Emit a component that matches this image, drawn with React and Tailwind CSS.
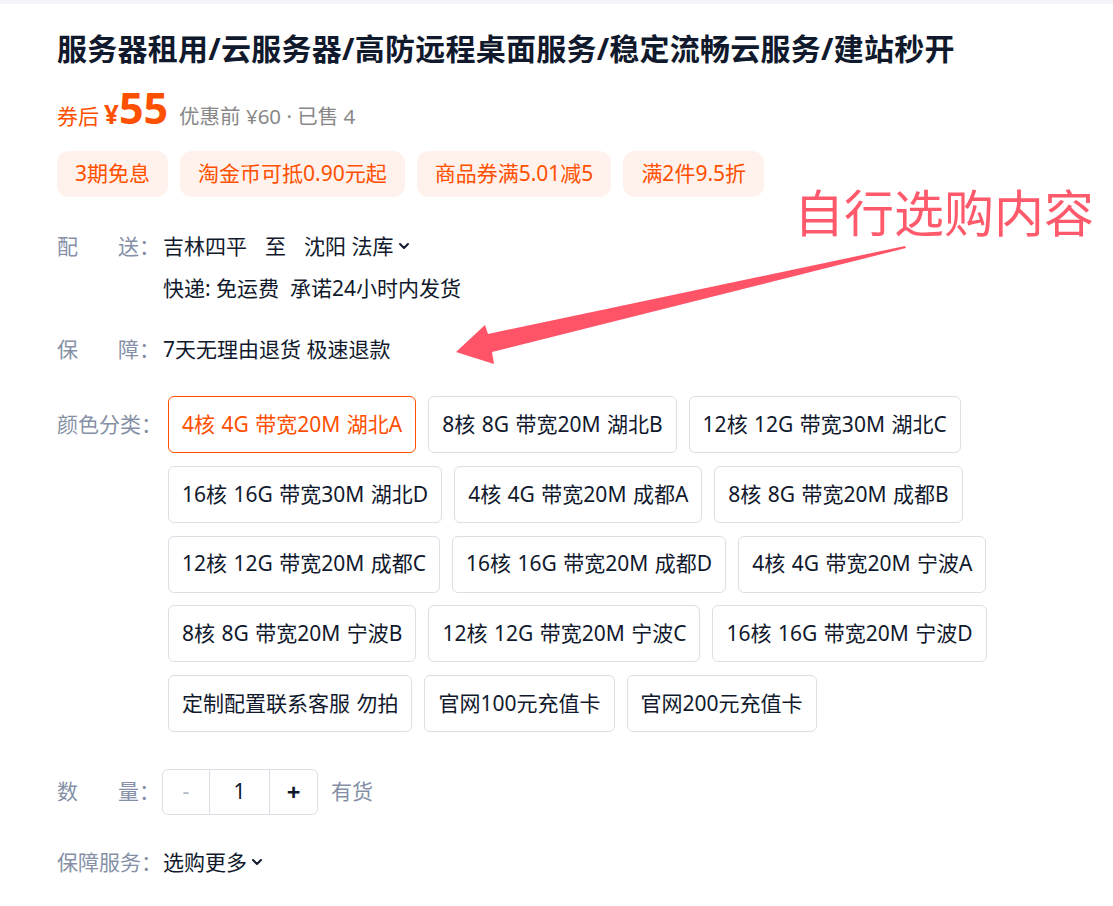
import { ChevronDown } from 'lucide-react'

const tags = ['3期免息', '淘金币可抵0.90元起', '商品券满5.01减5', '满2件9.5折']

const options = [
  '4核 4G 带宽20M 湖北A',
  '8核 8G 带宽20M 湖北B',
  '12核 12G 带宽30M 湖北C',
  '16核 16G 带宽30M 湖北D',
  '4核 4G 带宽20M 成都A',
  '8核 8G 带宽20M 成都B',
  '12核 12G 带宽20M 成都C',
  '16核 16G 带宽20M 成都D',
  '4核 4G 带宽20M 宁波A',
  '8核 8G 带宽20M 宁波B',
  '12核 12G 带宽20M 宁波C',
  '16核 16G 带宽20M 宁波D',
  '定制配置联系客服 勿拍',
  '官网100元充值卡',
  '官网200元充值卡',
]

function Label({ a, b }) {
  return (
    <div className="flex w-[103px] shrink-0 justify-between text-[#8590a6]">
      <span>{a}</span>
      <span>{b}</span>
    </div>
  )
}

export default function App() {
  const selected = 0

  return (
    <div
      className="relative min-h-[906px] w-full bg-white text-[21px] text-[#11192d]"
      style={{ fontFamily: '"Noto Sans", "Noto Sans CJK SC", sans-serif' }}
    >
      <div className="h-[4px] bg-[#f3f5f8]" />

      <div className="px-[57px]">
        <h1 className="mt-[25px] text-[30px] font-bold leading-[40px] tracking-[0.25px] text-[#11192d]">
          服务器租用/云服务器/高防远程桌面服务/稳定流畅云服务/建站秒开
        </h1>

        {/* price */}
        <div className="mt-[17px] flex h-[50px] items-baseline">
          <span className="text-[21px] text-[#ff5000]">券后</span>
          <span className="ml-[5px] text-[26px] font-bold text-[#ff5000]">¥</span>
          <span className="text-[43px] font-bold leading-none text-[#ff5000]">55</span>
          <span className="ml-[11px] text-[20.5px] text-[#888888]">优惠前 ¥60 · 已售 4</span>
        </div>

        {/* promotion tags */}
        <div className="mt-[15px] flex gap-[12px]">
          {tags.map((t) => (
            <div key={t} className="flex h-[46px] items-center rounded-[12px] bg-[#fff1eb] px-[18px] text-[21px] text-[#ff5000]">
              {t}
            </div>
          ))}
        </div>

        {/* delivery */}
        <div className="mt-[34px] flex leading-[30px]">
          <Label a="配" b="送：" />
          <div className="ml-[3px]">
            <div className="flex items-center">
              <span>吉林四平</span>
              <span className="ml-[18px]">至</span>
              <span className="ml-[18px]">沈阳 法库</span>
              <ChevronDown size={16} strokeWidth={3} className="ml-[3px]" />
            </div>
            <div className="mt-[12px]">快递: 免运费&nbsp;&nbsp;承诺24小时内发货</div>
          </div>
        </div>

        {/* guarantee */}
        <div className="mt-[31px] flex leading-[30px]">
          <Label a="保" b="障：" />
          <div className="ml-[3px]">7天无理由退货 极速退款</div>
        </div>

        {/* sku options */}
        <div className="mt-[32px] flex">
          <div className="flex h-[57px] w-[111px] shrink-0 items-center text-[#8590a6]">颜色分类：</div>
          <div className="flex max-w-[880px] flex-wrap gap-x-[12px] gap-y-[12.75px] [word-spacing:1px]">
            {options.map((o, i) => (
              <div
                key={o}
                className={
                  i === selected
                    ? 'flex h-[57px] items-center rounded-[6px] border border-[#ff5000] px-[13px] text-[#ff5000]'
                    : 'flex h-[57px] items-center rounded-[6px] border border-[#dcdfe6] px-[13px] text-[#11192d]'
                }
              >
                {o}
              </div>
            ))}
          </div>
        </div>

        {/* quantity */}
        <div className="mt-[37px] flex items-center">
          <Label a="数" b="量：" />
          <div className="ml-[2px] flex h-[46px] items-stretch rounded-[6px] border border-[#dcdfe6]">
            <div className="flex w-[46px] items-center justify-center text-[#b0b6c3]">-</div>
            <div className="flex w-[61px] items-center justify-center border-x border-[#dcdfe6] text-[#11192d]">1</div>
            <div className="flex w-[47px] items-center justify-center text-[24px] font-bold text-[#11192d]">+</div>
          </div>
          <span className="ml-[13px] text-[#8590a6]">有货</span>
        </div>

        {/* services */}
        <div className="mt-[32px] flex items-center leading-[30px]">
          <div className="w-[106px] shrink-0 text-[#8590a6]">保障服务：</div>
          <span>选购更多</span>
          <ChevronDown size={16} strokeWidth={3} className="ml-[2px]" />
        </div>
      </div>

      {/* annotation overlay */}
      <div className="absolute left-[794px] top-[178px] text-[50px] leading-[70px] text-[#ff5a6b]">自行选购内容</div>
      <svg className="pointer-events-none absolute left-0 top-0" width="1113" height="906" viewBox="0 0 1113 906">
        <polygon
          points="905,246 488,334 485,325 456,352 494,364 492,352 906,248"
          fill="#ff5468"
        />
      </svg>
    </div>
  )
}
